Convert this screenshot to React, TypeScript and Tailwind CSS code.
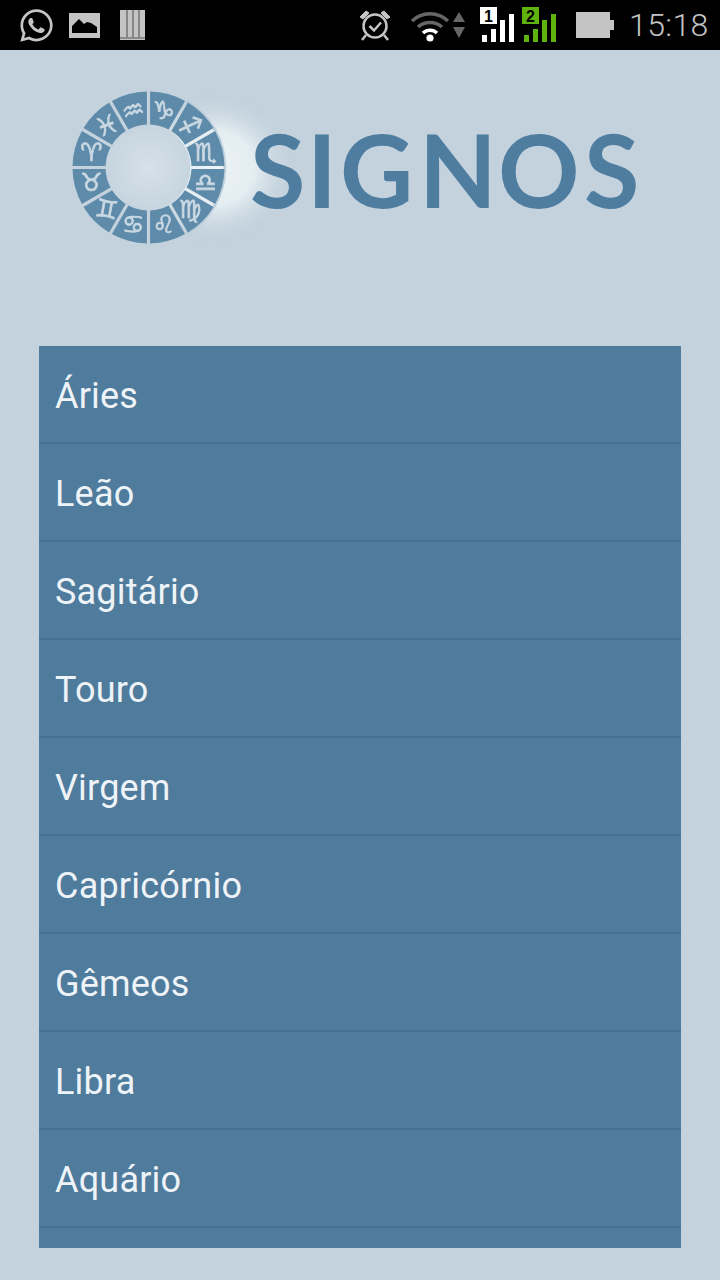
import React from "react";
import { FaWhatsapp } from "react-icons/fa";

const SIGNS = ["Áries", "Leão", "Sagitário", "Touro", "Virgem", "Capricórnio", "Gêmeos", "Libra", "Aquário"];
const WHEEL = ["♑", "♐", "♏", "♎", "♍", "♌", "♋", "♊", "♉", "♈", "♓", "♒"];
const TILT = [0, 20, 0, 0, 0, 0, 0, 10, 0, 0, -20, -15];

function sector(i: number, r1: number, r2: number, cx: number, cy: number) {
  const pad1 = 1.6 / r1;
  const pad2 = 1.6 / r2;
  const a0 = (i * Math.PI) / 6 - Math.PI / 2;
  const a1 = a0 + Math.PI / 6;
  const p = (r: number, a: number) => `${(cx + r * Math.cos(a)).toFixed(2)} ${(cy + r * Math.sin(a)).toFixed(2)}`;
  return `M${p(r2, a0 + pad2)}A${r2} ${r2} 0 0 1 ${p(r2, a1 - pad2)}L${p(r1, a1 - pad1)}A${r1} ${r1} 0 0 0 ${p(r1, a0 + pad1)}Z`;
}

function Logo() {
  const cx = 88.5;
  const cy = 77.5;
  return (
    <svg width="600" height="170" viewBox="0 0 600 170" className="block blur-[0.7px]">
      <defs>
        <radialGradient id="glow">
          <stop offset="0%" stopColor="#eef4f7" />
          <stop offset="50%" stopColor="#e4edf1" />
          <stop offset="100%" stopColor="#c3d2dd" stopOpacity="0" />
        </radialGradient>
        <radialGradient id="inner">
          <stop offset="0%" stopColor="#d6e1e8" />
          <stop offset="100%" stopColor="#c6d5df" />
        </radialGradient>
      </defs>
      <ellipse cx="152" cy="78" rx="85" ry="76" fill="url(#glow)" />
      <circle cx={cx} cy={cy} r="42" fill="url(#inner)" />
      <path d={`M${cx + 38} ${cy - 66}A76 76 0 0 1 ${cx + 38} ${cy + 66}`} fill="none" stroke="#b4c9d6" strokeWidth="3" opacity="0.8" />
      {WHEEL.map((g, i) => {
        const a = ((i + 0.5) * Math.PI) / 6 - Math.PI / 2;
        const x = cx + 59 * Math.cos(a);
        const y = cy + 59 * Math.sin(a);
        return (
          <g key={g}>
            <path d={sector(i, 43, 76, cx, cy)} fill="#5f8bab" />
            <text
              x={x}
              y={y}
              fontSize="25"
              fill="#c9d8e2"
              stroke="#c9d8e2"
              strokeWidth="0.7"
              textAnchor="middle"
              dominantBaseline="central"
              fontFamily="'DejaVu Sans', sans-serif"
              transform={`rotate(${TILT[i]} ${x} ${y})`}
            >
              {g + "\uFE0E"}
            </text>
          </g>
        );
      })}
      <text
        x="190 247 280 359 438 524"
        y="118"
        fontSize="101"
        fontWeight="700"
        fill="#4f7da0"
        fontFamily="Lato, sans-serif"
      >
        SIGNOS
      </text>
    </svg>
  );
}

function StatusBar() {
  const grey = "#c4c4c4";
  return (
    <div className="h-[50px] shrink-0 bg-black flex items-center pl-[19px]" style={{ color: grey }}>
      <FaWhatsapp className="w-[35px] h-[37px]" />
      <svg width="31" height="25" viewBox="0 0 31 25" className="ml-[15px]">
        <rect width="31" height="25" fill={grey} />
        <path d="M3 20V13L10 6l5 5 3-2 4 1 6 4v6z" fill="#000" />
      </svg>
      <svg width="25" height="30" viewBox="0 0 25 30" className="ml-[20px]">
        <rect x="0" y="0" width="25" height="30" fill={grey} />
        <path d="M7 0v29M13 0v29M19 0v29" stroke="#4a4a4a" strokeWidth="1" />
        <path d="M0 28h25" stroke="#888" strokeWidth="2" />
      </svg>
      <svg width="34" height="34" viewBox="0 0 34 34" fill="none" stroke={grey} className="ml-[213px]">
        <circle cx="17" cy="18" r="11.5" strokeWidth="2.5" />
        <path d="M11.5 18l4.5 4.5 7-8" strokeWidth="2.5" />
        <path d="M2 9l6-6 3 2-6 6zM32 9l-6-6-3 2 6 6z" fill={grey} strokeWidth="1" />
        <path d="M8 27l-4 5M26 27l4 5" strokeWidth="2.5" />
      </svg>
      <svg width="40" height="34" viewBox="0 0 40 34" fill="none" className="ml-[18px]">
        <path d="M2 13A26 26 0 0 1 38 13" stroke="#666" strokeWidth="3.5" />
        <path d="M8 19A18 18 0 0 1 32 19" stroke="#666" strokeWidth="3.5" />
        <path d="M13 25A10 10 0 0 1 27 25" stroke="#fff" strokeWidth="3.5" />
        <circle cx="20" cy="30" r="3.6" fill="#fff" />
      </svg>
      <svg width="12" height="26" viewBox="0 0 12 26" className="ml-[3px]">
        <path d="M6 0l6 10H0zM0 15h12L6 26z" fill="#666" />
      </svg>
      <svg width="36" height="36" viewBox="0 0 36 36" className="ml-[15px]">
        <rect x="0" y="0" width="17" height="17" fill="#fff" />
        <text x="8.5" y="14.5" fontSize="16" fontWeight="700" textAnchor="middle" fill="#000" fontFamily="'Liberation Sans', sans-serif">1</text>
        <path d="M2 28h5v7H2zM11 22h5v13h-5zM20 13h5v22h-5zM29 7h5v28h-5z" fill="#fff" />
      </svg>
      <svg width="36" height="36" viewBox="0 0 36 36" className="ml-[6px]">
        <rect x="0" y="0" width="17" height="17" fill="#5fb30f" />
        <text x="8.5" y="14.5" fontSize="16" fontWeight="700" textAnchor="middle" fill="#000" fontFamily="'Liberation Sans', sans-serif">2</text>
        <path d="M2 28h5v7H2zM11 22h5v13h-5zM20 13h5v22h-5zM29 7h5v28h-5z" fill="#5fb30f" />
      </svg>
      <svg width="38" height="26" viewBox="0 0 38 26" className="ml-[18px]">
        <path d="M0 0h34v8h4v10h-4v8H0z" fill={grey} />
      </svg>
      <span className="ml-[15px] text-[32px] leading-none font-light tracking-[0.4px]" style={{ fontFamily: "Roboto, sans-serif" }}>
        15:18
      </span>
    </div>
  );
}

export default function App() {
  return (
    <div className="w-[720px] h-[1280px] overflow-hidden bg-[#c3d2dd] flex flex-col" style={{ fontFamily: "Roboto, sans-serif" }}>
      <StatusBar />
      <div className="pl-[60px] pt-[40px] h-[296px] shrink-0">
        <Logo />
      </div>
      <ul className="mx-[39px] h-[902px] overflow-hidden bg-[#4f7b9d]">
        {SIGNS.map((s) => (
          <li key={s} className="h-[98px] border-b-2 border-[#456f8e] pl-[16px] pt-[4px] flex items-center text-[36px] leading-none tracking-[0.2px] text-[#eef3f7]">
            {s}
          </li>
        ))}
      </ul>
    </div>
  );
}
